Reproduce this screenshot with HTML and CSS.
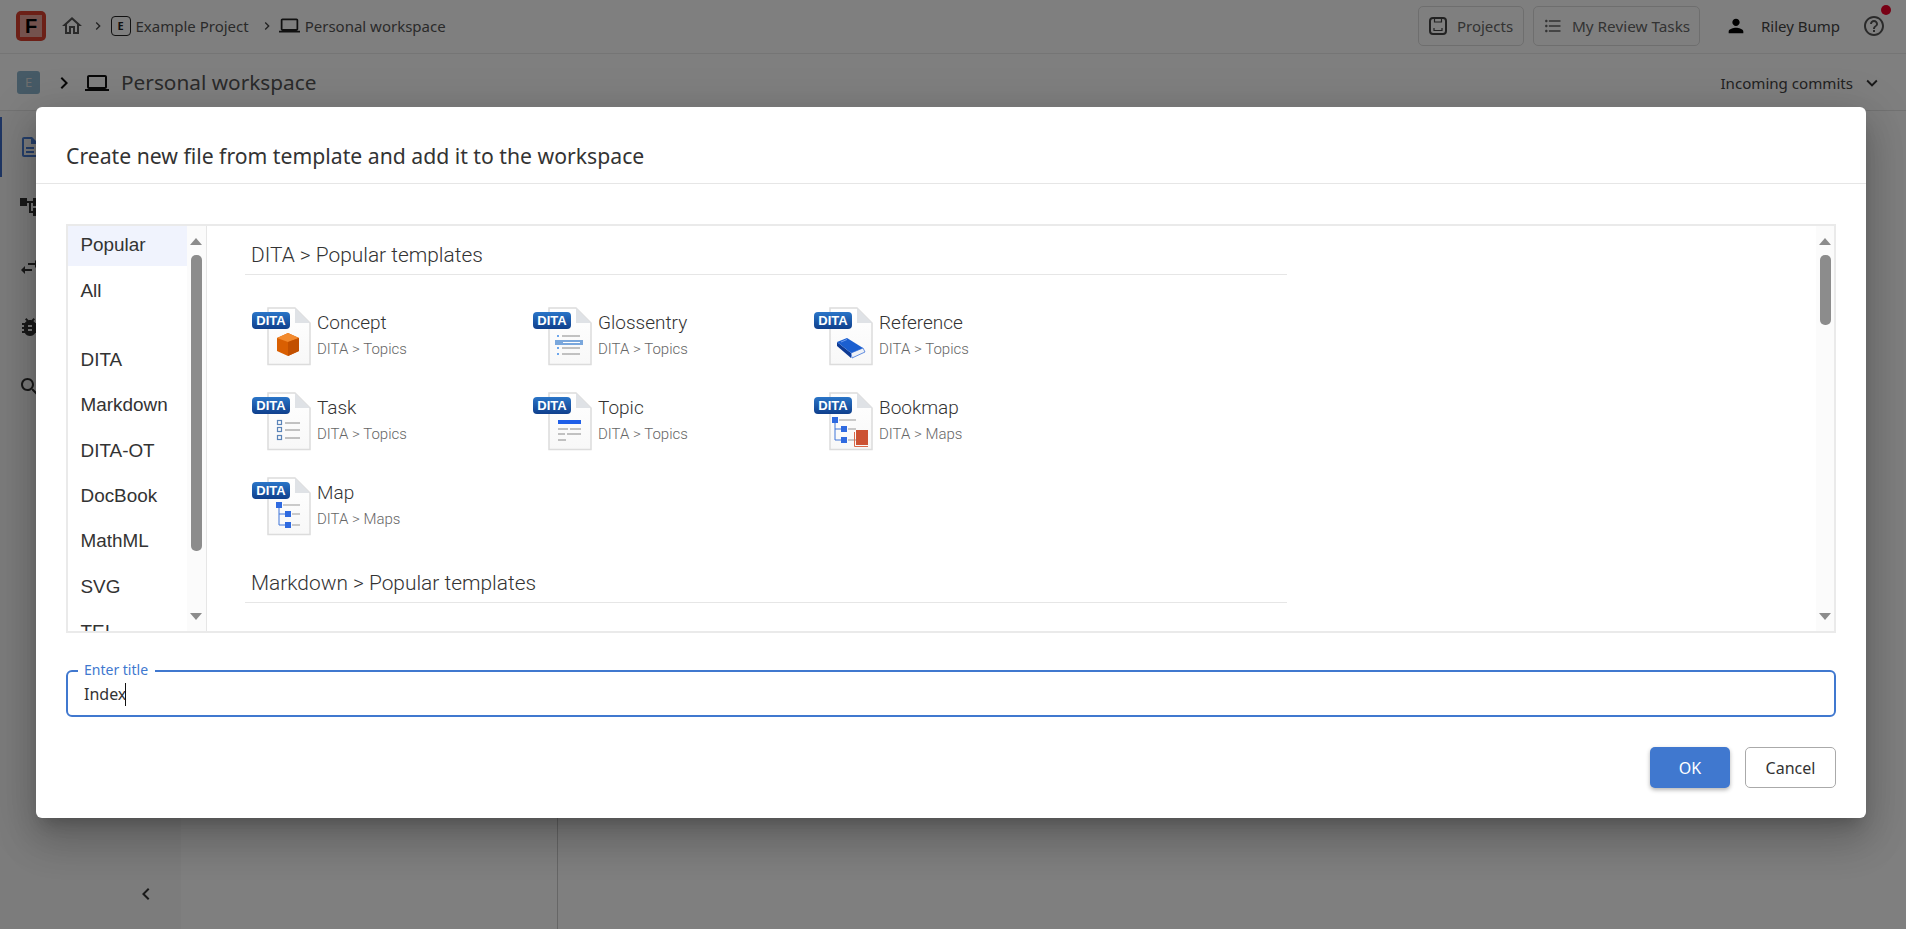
FILE: index.html
```html
<!DOCTYPE html>
<html>
<head>
    <title>Create new file from template</title>
    <link rel="stylesheet" href="styles.css">
</head>
<body>
    <svg class="defs" aria-hidden="true">
        <defs>
            <linearGradient id="badge" x1="0" y1="0" x2="0" y2="1">
                <stop offset="0" stop-color="#2a75c8"/>
                <stop offset="1" stop-color="#0f3f8c"/>
            </linearGradient>
            <linearGradient id="sheet" x1="0" y1="0" x2="0" y2="1">
                <stop offset="0" stop-color="#ffffff"/>
                <stop offset="1" stop-color="#f8f8f8"/>
            </linearGradient>
            <symbol id="doc" viewBox="0 0 60 60">
                <path d="M17 1h27l15 15v41.500h-42z" fill="url(#sheet)" stroke="#dcdcdc" stroke-width="1.500"/>
                <path d="M44 1v15h15z" fill="#dfe2e6"/>
                <rect x="1" y="5" width="38" height="17" rx="4" fill="url(#badge)"/>
                <text x="20" y="18" text-anchor="middle" class="badge-text">DITA</text>
            </symbol>
            <symbol id="tree" viewBox="0 0 60 60">
                <path d="M28 30v18h6M28 37h6" fill="none" stroke="#3f74d8" stroke-width="1"/>
                <path d="M32 28h17M41 37h8M41 48h8" fill="none" stroke="#999" stroke-width="1"/>
                <rect x="25" y="25" width="6" height="6" fill="#2f6ae0"/>
                <rect x="34" y="34" width="6" height="6" fill="#2f6ae0"/>
                <rect x="34" y="45" width="6" height="6" fill="#2f6ae0"/>
            </symbol>
        </defs>
    </svg>

    <div class="page">
        <header class="topbar">
            <div class="logo"><span class="logo-inner">F</span></div>
            <svg class="icon crumb-home" viewBox="0 0 24 24"><path d="M12 5.690l5 4.500V18h-2v-6H9v6H7v-7.810l5-4.500M12 3L2 12h3v8h6v-6h2v6h6v-8h3L12 3z"/></svg>
            <svg class="icon crumb-sep" viewBox="0 0 24 24"><path d="M10 6L8.590 7.410 13.170 12l-4.580 4.590L10 18l6-6z"/></svg>
            <span class="project-badge">E</span>
            <span class="crumb">Example Project</span>
            <svg class="icon crumb-sep" viewBox="0 0 24 24"><path d="M10 6L8.590 7.410 13.170 12l-4.580 4.590L10 18l6-6z"/></svg>
            <svg class="icon crumb-laptop" viewBox="0 0 24 24"><path d="M20 18c1.100 0 1.990-.9 1.990-2L22 6c0-1.100-.9-2-2-2H4c-1.100 0-2 .9-2 2v10c0 1.100.9 2 2 2H0v2h24v-2h-4zM4 6h16v10H4V6z"/></svg>
            <span class="crumb">Personal workspace</span>
            <div class="spacer"></div>
            <div class="top-btn btn-projects">
                <svg class="icon" viewBox="0 0 18 18"><rect x="1" y="1" width="16" height="16" rx="3" fill="none" stroke="currentColor" stroke-width="2"/><path d="M5.500 1v4h7V1M5 11v2.500h8V11" fill="none" stroke="currentColor" stroke-width="1.200"/></svg>
                <span>Projects</span>
            </div>
            <div class="top-btn btn-tasks">
                <svg class="icon" viewBox="0 0 24 24"><path d="M4 10.500c-.83 0-1.500.67-1.500 1.500s.67 1.500 1.500 1.500 1.500-.67 1.500-1.500-.67-1.500-1.500-1.500zm0-6c-.83 0-1.500.67-1.500 1.500S3.170 7.500 4 7.500 5.500 6.830 5.500 6 4.830 4.500 4 4.500zm0 12c-.83 0-1.500.68-1.500 1.500s.68 1.500 1.500 1.500 1.500-.68 1.500-1.500-.67-1.500-1.500-1.500zM7 19h14v-2H7v2zm0-6h14v-2H7v2zm0-8v2h14V5H7z"/></svg>
                <span>My Review Tasks</span>
            </div>
            <svg class="icon user-icon" viewBox="0 0 24 24"><path d="M12 12c2.210 0 4-1.790 4-4s-1.790-4-4-4-4 1.790-4 4 1.790 4 4 4zm0 2c-2.670 0-8 1.340-8 4v2h16v-2c0-2.660-5.330-4-8-4z"/></svg>
            <span class="user-name">Riley Bump</span>
            <div class="help">
                <svg class="icon" viewBox="0 0 24 24"><path d="M11 18h2v-2h-2v2zm1-16C6.480 2 2 6.480 2 12s4.480 10 10 10 10-4.480 10-10S17.520 2 12 2zm0 18c-4.410 0-8-3.590-8-8s3.590-8 8-8 8 3.590 8 8-3.590 8-8 8zm0-14c-2.210 0-4 1.790-4 4h2c0-1.100.9-2 2-2s2 .9 2 2c0 2-3 1.750-3 5h2c0-2.250 3-2.500 3-5 0-2.210-1.790-4-4-4z"/></svg>
                <span class="help-dot"></span>
            </div>
        </header>

        <div class="subbar">
            <span class="sub-badge">E</span>
            <svg class="icon sub-sep" viewBox="0 0 24 24"><path d="M10 6L8.590 7.410 13.170 12l-4.580 4.590L10 18l6-6z"/></svg>
            <svg class="icon sub-laptop" viewBox="0 0 24 24"><path d="M20 18c1.100 0 1.990-.9 1.990-2L22 6c0-1.100-.9-2-2-2H4c-1.100 0-2 .9-2 2v10c0 1.100.9 2 2 2H0v2h24v-2h-4zM4 6h16v10H4V6z"/></svg>
            <span class="sub-title">Personal workspace</span>
            <div class="spacer"></div>
            <span class="commits">Incoming commits</span>
            <svg class="icon commits-arrow" viewBox="0 0 24 24"><path d="M16.590 8.590L12 13.170 7.410 8.590 6 10l6 6 6-6z"/></svg>
        </div>

        <div class="workspace">
            <nav class="rail">
                <div class="rail-item active"><svg class="icon" viewBox="0 0 24 24"><path d="M8 16h8v2H8zm0-4h8v2H8zm6-10H6c-1.100 0-2 .9-2 2v16c0 1.100.89 2 1.990 2H18c1.100 0 2-.9 2-2V8l-6-6zm4 18H6V4h7v5h5v11z"/></svg></div>
                <div class="rail-item"><svg class="icon" viewBox="0 0 24 24"><path d="M22 11V3h-7v3H9V3H2v8h7V8h2v10h4v3h7v-8h-7v3h-2V8h2v3z"/></svg></div>
                <div class="rail-item"><svg class="icon" viewBox="0 0 24 24"><path d="M6.990 11L3 15l3.990 4v-3H14v-2H6.990v-3zM21 9l-3.990-4v3H10v2h7.010v3L21 9z"/></svg></div>
                <div class="rail-item"><svg class="icon" viewBox="0 0 24 24"><path d="M20 8h-2.810c-.45-.78-1.070-1.450-1.820-1.960L17 4.410 15.590 3l-2.170 2.170C12.960 5.060 12.490 5 12 5c-.49 0-.96.06-1.410.17L8.410 3 7 4.410l1.620 1.630C7.880 6.550 7.260 7.220 6.810 8H4v2h2.090c-.05.33-.09.66-.09 1v1H4v2h2v1c0 .34.04.67.09 1H4v2h2.810c1.040 1.790 2.970 3 5.190 3s4.150-1.210 5.190-3H20v-2h-2.090c.05-.33.09-.66.09-1v-1h2v-2h-2v-1c0-.34-.04-.67-.09-1H20V8zm-6 8h-4v-2h4v2zm0-4h-4v-2h4v2z"/></svg></div>
                <div class="rail-item"><svg class="icon" viewBox="0 0 24 24"><path d="M15.500 14h-.79l-.28-.27C15.410 12.590 16 11.110 16 9.500 16 5.910 13.090 3 9.500 3S3 5.910 3 9.500 5.910 16 9.500 16c1.610 0 3.090-.59 4.230-1.570l.27.28v.79l5 4.990L20.490 19l-4.990-5zm-6 0C7.010 14 5 11.990 5 9.500S7.010 5 9.500 5 14 7.010 14 9.500 11.990 14 9.500 14z"/></svg></div>
                <div class="spacer"></div>
                <svg class="icon collapse" viewBox="0 0 24 24"><path d="M15.410 7.410L14 6l-6 6 6 6 1.410-1.410L10.830 12z"/></svg>
            </nav>
            <div class="files"></div>
            <div class="changes"></div>
        </div>
    </div>

    <div class="overlay">
        <div class="dialog">
            <div class="dialog-head">Create new file from template and add it to the workspace</div>
            <div class="dialog-body">
                <div class="chooser">
                    <div class="cats">
                        <ul class="cat-list">
                            <li class="cat selected">Popular</li>
                            <li class="cat">All</li>
                            <li class="cat gap"></li>
                            <li class="cat">DITA</li>
                            <li class="cat">Markdown</li>
                            <li class="cat">DITA-OT</li>
                            <li class="cat">DocBook</li>
                            <li class="cat">MathML</li>
                            <li class="cat">SVG</li>
                            <li class="cat">TEI</li>
                        </ul>
                        <div class="scroll">
                            <span class="arrow up"></span>
                            <span class="thumb thumb-cats"></span>
                            <span class="arrow down"></span>
                        </div>
                    </div>
                    <div class="templates">
                        <div class="tpl-scroll">
                            <h2 class="tpl-head">DITA &gt; Popular templates</h2>
                            <div class="tpl-grid">
                                <div class="tpl">
                                    <svg class="tpl-icon" viewBox="0 0 60 60">
                                        <use href="#doc"/>
                                        <path d="M26 31l11-5 11 5v13l-11 5-11-5z" fill="#d95f02"/>
                                        <path d="M26 31l11-5 11 5-11 4z" fill="#f28a2e"/>
                                        <path d="M37 35l11-4v13l-11 5z" fill="#c25000"/>
                                    </svg>
                                    <div class="tpl-text"><div class="tpl-name">Concept</div><div class="tpl-path">DITA &gt; Topics</div></div>
                                </div>
                                <div class="tpl">
                                    <svg class="tpl-icon" viewBox="0 0 60 60">
                                        <use href="#doc"/>
                                        <path d="M30 29h18M30 41h18M30 47h18" stroke="#888" stroke-width="1"/>
                                        <rect x="23" y="33" width="28" height="5" fill="#7aa7dc"/>
                                        <path d="M31 35.500h17" stroke="#fff" stroke-width="1"/>
                                        <path d="M25 29h2M25 41h2M25 47h2" stroke="#3f8ae8" stroke-width="1.500"/>
                                    </svg>
                                    <div class="tpl-text"><div class="tpl-name">Glossentry</div><div class="tpl-path">DITA &gt; Topics</div></div>
                                </div>
                                <div class="tpl">
                                    <svg class="tpl-icon" viewBox="0 0 60 60">
                                        <use href="#doc"/>
                                        <path d="M38 46l12-5 2 4-13 6z" fill="#eef1f6" stroke="#3f74d8" stroke-width="0.800"/>
                                        <path d="M24 35v4l14 12v-5z" fill="#0d3a94"/>
                                        <path d="M24 35l10-4 16 10-12 5z" fill="#1b5fd0"/>
                                        <path d="M28 35l6-2.500" stroke="#6d9cf0" stroke-width="1"/>
                                    </svg>
                                    <div class="tpl-text"><div class="tpl-name">Reference</div><div class="tpl-path">DITA &gt; Topics</div></div>
                                </div>
                                <div class="tpl">
                                    <svg class="tpl-icon" viewBox="0 0 60 60">
                                        <use href="#doc"/>
                                        <path d="M34 31h15M34 38h15M34 46h15" stroke="#888" stroke-width="1"/>
                                        <rect x="26.500" y="28.500" width="4" height="4" fill="none" stroke="#5b84b8" stroke-width="1.200"/>
                                        <rect x="26.500" y="35.500" width="4" height="4" fill="none" stroke="#5b84b8" stroke-width="1.200"/>
                                        <rect x="26.500" y="43.500" width="4" height="4" fill="none" stroke="#5b84b8" stroke-width="1.200"/>
                                    </svg>
                                    <div class="tpl-text"><div class="tpl-name">Task</div><div class="tpl-path">DITA &gt; Topics</div></div>
                                </div>
                                <div class="tpl">
                                    <svg class="tpl-icon" viewBox="0 0 60 60">
                                        <use href="#doc"/>
                                        <rect x="26" y="28" width="23" height="4" fill="#1f5fe8"/>
                                        <path d="M26 37h10M38 37h11M26 42h7M35 42h14M26 48h8" stroke="#888" stroke-width="1"/>
                                    </svg>
                                    <div class="tpl-text"><div class="tpl-name">Topic</div><div class="tpl-path">DITA &gt; Topics</div></div>
                                </div>
                                <div class="tpl">
                                    <svg class="tpl-icon" viewBox="0 0 60 60">
                                        <use href="#doc"/>
                                        <g transform="translate(-6 0)"><use href="#tree"/></g>
                                        <rect x="43" y="38" width="12" height="15" fill="#cc5233"/>
                                        <path d="M41.500 40v14.500h13.500" fill="none" stroke="#d9694a" stroke-width="1"/>
                                    </svg>
                                    <div class="tpl-text"><div class="tpl-name">Bookmap</div><div class="tpl-path">DITA &gt; Maps</div></div>
                                </div>
                                <div class="tpl">
                                    <svg class="tpl-icon" viewBox="0 0 60 60">
                                        <use href="#doc"/>
                                        <use href="#tree"/>
                                    </svg>
                                    <div class="tpl-text"><div class="tpl-name">Map</div><div class="tpl-path">DITA &gt; Maps</div></div>
                                </div>
                            </div>
                            <h2 class="tpl-head">Markdown &gt; Popular templates</h2>
                        </div>
                        <div class="scroll scroll-main">
                            <span class="arrow up"></span>
                            <span class="thumb thumb-main"></span>
                            <span class="arrow down"></span>
                        </div>
                    </div>
                </div>

                <div class="field">
                    <label class="field-label">Enter title</label>
                    <div class="field-value">Index<span class="caret"></span></div>
                </div>

                <div class="actions">
                    <button class="btn btn-ok">OK</button>
                    <button class="btn btn-cancel">Cancel</button>
                </div>
            </div>
        </div>
    </div>
</body>
</html>
```

FILE: styles.css
```css
html, body {
    height: 100%;
    margin: 0;
    padding: 0;
    overflow: hidden;
}

body {
    font-family: "Noto Sans", sans-serif;
    color: #555;
    background-color: #fff;
}

.defs {
    position: absolute;
    width: 0;
    height: 0;
}

.badge-text {
    font-family: "Liberation Sans", sans-serif;
    font-size: 13px;
    font-weight: 700;
    fill: #fff;
}

.icon {
    display: block;
    width: 24px;
    height: 24px;
    fill: currentColor;
    flex: none;
}

.spacer {
    flex: 1;
}

/* page behind the dialog */
.page {
    height: 100%;
    display: flex;
    flex-direction: column;
}

.topbar {
    height: 54px;
    flex: none;
    box-sizing: border-box;
    display: flex;
    align-items: center;
    padding: 0 20px 2px 16px;
    margin-bottom: 1px;
    border-bottom: 1px solid #eaeaea;
    font-size: 15px;
}

.logo {
    width: 30px;
    height: 30px;
    box-sizing: border-box;
    padding: 4px;
    border-radius: 5px;
    background-color: #d8402f;
    margin-right: 14px;
}

.logo-inner {
    display: block;
    height: 22px;
    background-color: #e8a59a;
    color: #000;
    font: 700 20px/23px "Liberation Sans", sans-serif;
    text-align: center;
}

.crumb-home {
    width: 24px;
    height: 24px;
    margin-right: 5.500px;
}

.crumb-sep {
    width: 16px;
    height: 16px;
    margin-right: 5px;
    color: #444;
}

.project-badge {
    width: 18px;
    height: 18px;
    border: 1.5px solid #222;
    border-radius: 4px;
    font-size: 11px;
    font-weight: 700;
    line-height: 18px;
    text-align: center;
    color: #222;
    margin-right: 5px;
}

.crumb {
    margin-right: 10px;
}

.crumb-laptop {
    width: 21px;
    height: 21px;
    margin-right: 5px;
    margin-left: -1px;
    color: #222;
}

.top-btn {
    height: 38px;
    display: flex;
    align-items: center;
    border: 1px solid #ddd;
    border-radius: 5px;
    margin-right: 9px;
    color: #666;
}

.btn-projects {
    width: 104px;
}

.btn-projects .icon {
    width: 18px;
    height: 18px;
    margin: 0 10px 0 10px;
    color: #444;
}

.btn-tasks {
    width: 165px;
    margin-right: 0;
}

.btn-tasks .icon {
    width: 20px;
    height: 20px;
    margin: 0 9px 0 9px;
}

.btn-tasks span {
    font-size: 15.300px;
}

.user-icon {
    width: 22px;
    height: 22px;
    margin: 0 14px 0 25px;
    color: #000;
}

.user-name {
    margin-right: 22px;
    color: #444;
}

.help {
    position: relative;
    color: #555;
}

.help-dot {
    position: absolute;
    top: -9px;
    right: -5px;
    width: 10px;
    height: 10px;
    border-radius: 50%;
    background-color: #f00028;
}

.subbar {
    height: 56px;
    flex: none;
    box-sizing: border-box;
    display: flex;
    align-items: center;
    padding: 0 20px 0 17px;
    border-bottom: 1px solid #e4e4e4;
}

.sub-badge {
    width: 23px;
    height: 23px;
    border-radius: 3px;
    background-color: #8cb4cc;
    color: #ddd;
    font-size: 13px;
    line-height: 23px;
    text-align: center;
    margin-right: 13px;
}

.sub-sep {
    margin-right: 9px;
    margin-left: -1px;
    color: #111;
}

.sub-laptop {
    width: 24px;
    height: 24px;
    margin-right: 12px;
    color: #111;
}

.sub-title {
    font-size: 20.800px;
    color: #555;
    position: relative;
    top: -1px;
}

.commits {
    font-size: 15.100px;
    color: #444;
    margin-right: 8px;
}

.commits-arrow {
    width: 22px;
    height: 22px;
    margin-right: 3px;
    color: #333;
}

.workspace {
    flex: 1;
    display: flex;
}

.rail {
    width: 181px;
    box-sizing: border-box;
    background-color: #f8f8f8;
    padding-top: 6px;
    display: flex;
    flex-direction: column;
}

.rail-item {
    width: 58px;
    height: 60px;
    box-sizing: border-box;
    border-left: 2px solid transparent;
    display: flex;
    align-items: center;
    justify-content: center;
    color: #333;
}

.rail-item.active {
    border-left: 2px solid #3e6dc8;
    color: #4b7fd6;
}

.collapse {
    margin: 0 0 23px 134px;
    color: #333;
}

.files {
    width: 376px;
    border-right: 1px solid #ccc;
}

.changes {
    flex: 1;
}

/* modal */
.overlay {
    position: absolute;
    top: 0;
    left: 0;
    right: 0;
    bottom: 0;
    padding: 107px 40px 0 36px;
    background-color: rgba(0, 0, 0, 0.5);
}

.dialog {
    height: 711px;
    background-color: #fff;
    border-radius: 6px;
    box-shadow: 0 11px 15px -7px rgba(0, 0, 0, 0.2), 0 24px 38px 3px rgba(0, 0, 0, 0.14), 0 9px 46px 8px rgba(0, 0, 0, 0.12);
}

.dialog-head {
    height: 76px;
    padding-left: 30px;
    border-bottom: 1px solid #e6e6e6;
    font-size: 21.200px;
    line-height: 98px;
    color: #333;
}

.dialog-body {
    padding: 40px 30px 0;
}

.chooser {
    height: 409px;
    box-sizing: border-box;
    border: 2px solid #eaeaea;
    display: flex;
}

.cats {
    width: 139px;
    flex: none;
    box-sizing: border-box;
    position: relative;
    overflow: hidden;
    border-right: 1px solid #e6e6e6;
    display: flex;
}

.cat-list {
    width: 119px;
    flex: none;
    margin: 0;
    padding: 0;
    list-style: none;
    font: 18.900px "Liberation Sans", sans-serif;
    color: #333;
}

.cat {
    height: 45.400px;
    line-height: 39.500px;
    padding-left: 12.500px;
}

.cat.gap {
    height: 23px;
}

.cat.selected {
    background: linear-gradient(#f0f3fd 40px, #fff 40px);
    line-height: 38px;
}

.scroll {
    width: 19px;
    flex: none;
    background-color: #fbfbfb;
    position: relative;
}

.arrow {
    position: absolute;
    left: 3px;
    width: 0;
    height: 0;
    border-left: 6.500px solid transparent;
    border-right: 6.500px solid transparent;
}

.arrow.up {
    top: 12px;
    border-bottom: 7px solid #8c8c8c;
}

.arrow.down {
    bottom: 11px;
    border-top: 7px solid #8c8c8c;
}

.thumb {
    position: absolute;
    left: 4px;
    top: 29px;
    width: 11px;
    border-radius: 5px;
    background-color: #8c8c8c;
}

.thumb-cats {
    height: 296px;
}

.thumb-main {
    height: 70px;
}

.templates {
    flex: 1;
    display: flex;
    min-width: 0;
}

.tpl-scroll {
    flex: 1;
    padding: 8px 0 0 38px;
    overflow: hidden;
    color: #333;
    font-family: Roboto, sans-serif;
    font-weight: 300;
}

.tpl-head {
    width: 1042px;
    height: 41px;
    box-sizing: border-box;
    margin: 0;
    padding-left: 6px;
    border-bottom: 1px solid #e6e6e6;
    font-size: 20.900px;
    font-weight: 300;
    line-height: 43px;
}

.tpl-grid {
    width: 1042px;
    margin-top: 32px;
    margin-left: 6px;
    display: grid;
    grid-template-columns: repeat(3, 281px);
    grid-auto-rows: 85px;
}

.tpl {
    display: flex;
}

.tpl-icon {
    width: 60px;
    height: 60px;
    flex: none;
    margin-right: 6px;
}

.tpl-text {
    padding-top: 4px;
}

.tpl-name {
    font-size: 19px;
    line-height: 24px;
}

.tpl-path {
    margin-top: 5px;
    font-size: 15px;
    line-height: 18px;
    color: #666;
}

.scroll-main {
    width: 18px;
    margin-right: 0;
}

.field {
    position: relative;
    height: 47px;
    box-sizing: border-box;
    margin-top: 37px;
    border: 2px solid #4078cf;
    border-radius: 6px;
}

.field-label {
    position: absolute;
    top: -12px;
    left: 10px;
    padding: 0 7px 0 6px;
    background-color: #fff;
    color: #4078cf;
    font-size: 14px;
    line-height: 20px;
}

.field-value {
    padding: 10px 0 0 16px;
    font-size: 16px;
    line-height: 24px;
    color: #333;
}

.caret {
    display: inline-block;
    width: 1px;
    height: 23px;
    margin-left: -1px;
    background-color: #111;
    vertical-align: -6px;
}

.actions {
    margin-top: 30px;
    display: flex;
    justify-content: flex-end;
    gap: 15px;
}

.btn {
    height: 41px;
    box-sizing: border-box;
    border-radius: 5px;
    font-family: "Noto Sans", sans-serif;
    font-size: 16px;
}

.btn-ok {
    width: 80px;
    border: 0;
    background-color: #4078cf;
    color: #fff;
    box-shadow: 0 2px 4px rgba(0, 0, 0, 0.3);
}

.btn-cancel {
    width: 91px;
    border: 1px solid #aaa;
    background-color: #fff;
    color: #333;
}
```
